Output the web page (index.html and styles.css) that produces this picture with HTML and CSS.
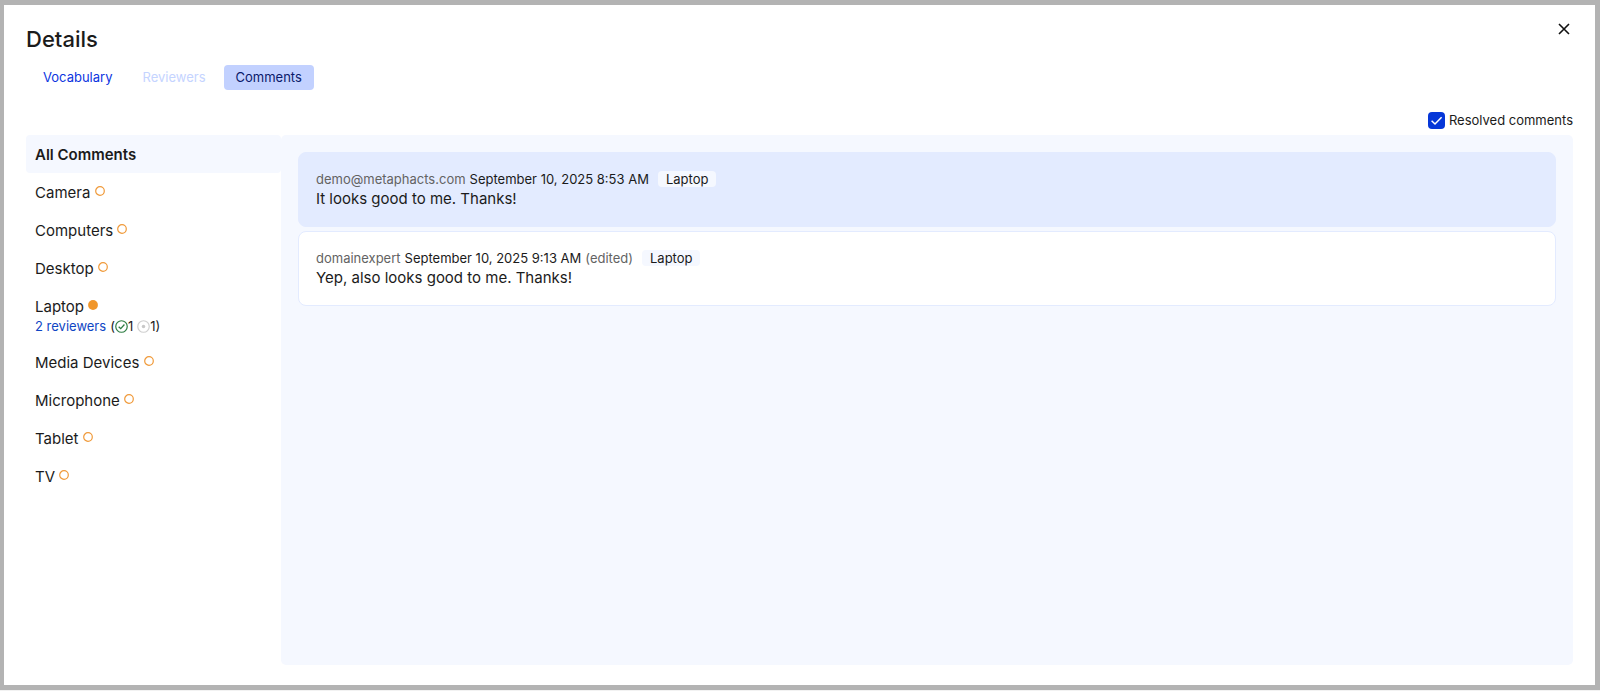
FILE: index.html
```html
<!DOCTYPE html>
<html lang="en">
<head>
<meta charset="utf-8">
<meta name="viewport" content="width=device-width, initial-scale=1">
<title>Details</title>
<link rel="stylesheet" href="styles.css">
</head>
<body>
<svg class="sprite" aria-hidden="true">
  <symbol id="ring" viewBox="0 0 10 10"><circle cx="5" cy="5" r="4.3" fill="none" stroke="#f09a3a" stroke-width="1.2"/></symbol>
</svg>
<main class="dialog" role="dialog" aria-labelledby="title">
  <header class="header">
    <h1 class="title" id="title">Details</h1>
    <button class="close" type="button" aria-label="Close">
      <svg class="close-icon" viewBox="0 0 12 12"><path d="M1 1 11 11M11 1 1 11" fill="none" stroke="#111" stroke-width="1.6"/></svg>
    </button>
  </header>
  <nav class="tabs">
    <button class="tab" type="button">Vocabulary</button>
    <button class="tab" type="button" disabled>Reviewers</button>
    <button class="tab tab-active" type="button">Comments</button>
  </nav>
  <div class="filter">
    <input class="check" type="checkbox" id="resolved" checked>
    <label for="resolved">Resolved comments</label>
  </div>
  <div class="content">
    <ul class="terms">
      <li class="term term-active">All Comments</li>
      <li class="term">Camera <svg class="dot"><use href="#ring"/></svg></li>
      <li class="term">Computers <svg class="dot"><use href="#ring"/></svg></li>
      <li class="term">Desktop <svg class="dot"><use href="#ring"/></svg></li>
      <li class="term">Laptop <svg class="dot" viewBox="0 0 10 10"><circle cx="5" cy="5" r="4.9" fill="#f0962a"/></svg>
        <div class="reviews"><a class="link" href="#reviewers">2 reviewers</a><span class="counts">(<svg class="state" viewBox="0 0 12 12"><circle cx="6" cy="6" r="5.3" fill="none" stroke="#2e7d43" stroke-width="1.1"/><path d="M3.4 6.2 5.3 8 8.7 4.2" fill="none" stroke="#2e7d43" stroke-width="1.2"/></svg>1</span><span class="counts"><svg class="state" viewBox="0 0 12 12"><circle cx="6" cy="6" r="5.3" fill="none" stroke="#cfcfcf" stroke-width="1.1"/><circle cx="6" cy="6" r="1.6" fill="#c8c8c8"/></svg>1)</span></div>
      </li>
      <li class="term">Media Devices <svg class="dot"><use href="#ring"/></svg></li>
      <li class="term">Microphone <svg class="dot"><use href="#ring"/></svg></li>
      <li class="term">Tablet <svg class="dot"><use href="#ring"/></svg></li>
      <li class="term">TV <svg class="dot"><use href="#ring"/></svg></li>
    </ul>
    <section class="comments">
      <article class="comment comment-active">
        <div class="meta"><span class="muted">demo@metaphacts.com</span> <time>September 10, 2025 8:53 AM</time><span class="tag">Laptop</span></div>
        <p class="body">It looks good to me. Thanks!</p>
      </article>
      <article class="comment">
        <div class="meta"><span class="muted">domainexpert</span> <time>September 10, 2025 9:13 AM</time> <span class="muted">(edited)</span><span class="tag">Laptop</span></div>
        <p class="body">Yep, also looks good to me. Thanks!</p>
      </article>
    </section>
  </div>
</main>
</body>
</html>
```
FILE: styles.css
```css
* { box-sizing: border-box; }
html { background: #f2f2f2; }
body {
  margin: 0;
  min-height: calc(100vh - 1px);
  padding: 5px 5px 5px 4px;
  display: flex;
  background: #b3b3b3;
  color: #1b1b1b;
  font: 13px/20px Inter, "Liberation Sans", sans-serif;
}
button { border: 0; background: none; font: inherit; }
.sprite { position: absolute; width: 0; height: 0; }
.dialog {
  flex: 1;
  display: flex;
  flex-direction: column;
  padding: 16px 22px 20px;
  background: #fff;
}
.header { display: flex; align-items: flex-start; justify-content: space-between; }
.title { margin: 4px 0 0; font-size: 22px; line-height: 28px; font-weight: 500; }
.close { display: flex; padding: 2px 3px; }
.close-icon { width: 12px; height: 12px; }
.tabs { display: flex; gap: 6px; margin-top: 12px; padding-left: 5px; }
.tab { height: 25px; padding: 0 12px 2px; border-radius: 4px; color: #0b35df; }
.tab:disabled { color: #c5d4ff; }
.tab-active { background: #c2d1ff; color: #0a1a6b; }
.filter { display: flex; align-items: center; justify-content: flex-end; gap: 4px; margin-top: 20px; }
.check {
  appearance: none;
  width: 17px;
  height: 17px;
  margin: 0;
  border-radius: 4px;
  background: #0637d8 url("data:image/svg+xml,%3Csvg xmlns='http://www.w3.org/2000/svg' viewBox='0 0 17 17'%3E%3Cpath d='M3.6 8.8 7 12 13.6 5.2' fill='none' stroke='white' stroke-width='1.5'/%3E%3C/svg%3E");
}
.content { flex: 1; display: flex; margin-top: 5px; }
.terms { width: 255px; margin: 0; padding: 0; list-style: none; font-size: 15px; }
.term { padding: 10px 9px 8px; border-radius: 4px; }
.term-active { background: #f5f8ff; font-weight: 600; }
.dot { width: 10px; height: 10px; vertical-align: 2px; }
.reviews { display: flex; gap: 4px; font-size: 13px; line-height: 18px; }
.link { color: #0f46c4; text-decoration: none; }
.counts { display: flex; align-items: center; }
.state { width: 13px; height: 13px; }
.comments {
  flex: 1;
  display: flex;
  flex-direction: column;
  gap: 4px;
  padding: 17px;
  border-radius: 5px;
  background: #f5f8ff;
}
.comment { padding: 16px 17px 18px; border: 1px solid #e3ebff; border-radius: 8px; background: #fff; }
.comment-active { background: #e3ebff; }
.meta { display: flex; align-items: center; gap: 4px; }
.muted { color: #636363; }
.tag { margin-left: 5px; padding: 0 8px; border-radius: 4px; background: #f5f8ff; line-height: 16px; }
.body { margin: 0; font-size: 15px; line-height: 19px; }
```
